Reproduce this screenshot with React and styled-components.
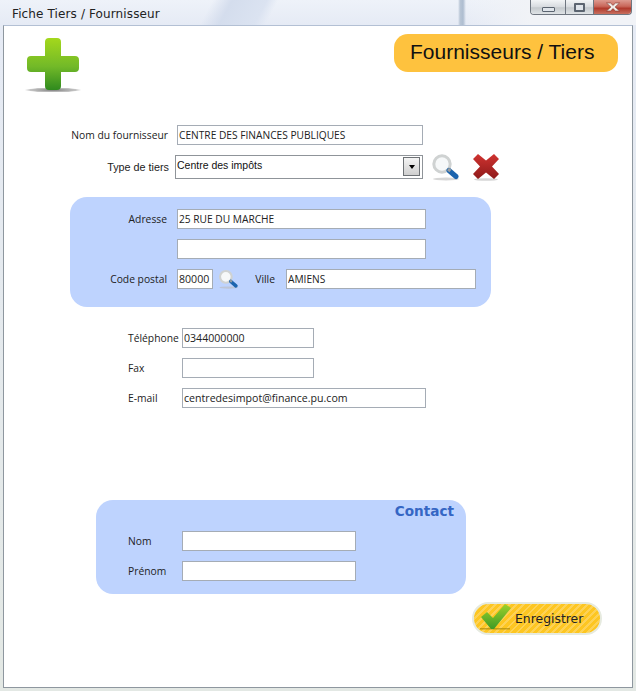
import React from 'react'
import styled, { createGlobalStyle } from 'styled-components'

function PlusIcon() {
    return (
        <svg width="58" height="56" viewBox="0 0 58 56">
            <defs>
                <linearGradient id="plusFill" x1="0" y1="0" x2="0" y2="1">
                    <stop offset="0" stopColor="#a4d81c" />
                    <stop offset="0.55" stopColor="#72b928" />
                    <stop offset="1" stopColor="#2f8a1e" />
                </linearGradient>
                <radialGradient id="plusShadow">
                    <stop offset="0" stopColor="#777" />
                    <stop offset="0.8" stopColor="#aaa" stopOpacity="0.7" />
                    <stop offset="1" stopColor="#ccc" stopOpacity="0" />
                </radialGradient>
            </defs>
            <ellipse cx="29" cy="53" rx="29" ry="2.5" fill="url(#plusShadow)" />
            <path
                d="M25 1h8a4 4 0 0 1 4 4v14h14a4 4 0 0 1 4 4v8a4 4 0 0 1-4 4H37v14a4 4 0 0 1-4 4h-8a4 4 0 0 1-4-4V35H7a4 4 0 0 1-4-4v-8a4 4 0 0 1 4-4h14V5a4 4 0 0 1 4-4z"
                fill="url(#plusFill)"
            />
        </svg>
    )
}

function SearchIcon({ size }) {
    return (
        <svg width={size} height={size} viewBox="0 0 28 28">
            <ellipse cx="15" cy="26" rx="13" ry="1.5" fill="#bbb" opacity="0.6" />
            <circle cx="11" cy="11" r="8.2" fill="#f6f8f9" stroke="#cfd2d2" strokeWidth="3" />
            <path d="M18 17.5l7 6" stroke="#1c64ad" strokeWidth="5" strokeLinecap="round" />
            <path d="M17 16l2.4 2" stroke="#9a9d9e" strokeWidth="3" />
        </svg>
    )
}

function CrossIcon() {
    return (
        <svg width="28" height="28" viewBox="0 0 28 28">
            <defs>
                <linearGradient id="crossFill" x1="0" y1="0" x2="0" y2="1">
                    <stop offset="0" stopColor="#d03330" />
                    <stop offset="1" stopColor="#8e1a1a" />
                </linearGradient>
            </defs>
            <ellipse cx="14" cy="26.5" rx="12" ry="1.3" fill="#bbb" opacity="0.6" />
            <path
                d="M6 1l8 6.5L22 1l5 5-7 7.5 7 7.5-5 5-8-6.5L6 26l-5-5 7-7.5L1 6z"
                fill="url(#crossFill)"
            />
        </svg>
    )
}

function CheckIcon() {
    return (
        <svg width="36" height="30" viewBox="0 0 36 30">
            <defs>
                <linearGradient id="checkFill" x1="0" y1="0" x2="0" y2="1">
                    <stop offset="0" stopColor="#9ed22a" />
                    <stop offset="1" stopColor="#3f9a26" />
                </linearGradient>
            </defs>
            <rect x="2" y="25" width="30" height="1.5" fill="#a98a10" opacity="0.7" />
            <path d="M3 14l6-5 6 6L27 1l6 4-17 21h-3z" fill="url(#checkFill)" />
        </svg>
    )
}

function CloseGlyph() {
    return (
        <svg width="16" height="10" viewBox="0 0 16 10">
            <path d="M1.5 1h4l2.5 2.4L10.5 1h4l-4.4 4 4.4 4h-4L8 6.6 5.5 9h-4l4.4-4z" fill="#f1ece9" stroke="#7d3a32" strokeWidth="0.6" />
        </svg>
    )
}

function App() {
    return (
        <Window>
            <GlobalStyle />
            <TitleBar>
                <Caption>Fiche Tiers / Fournisseur</Caption>
                <Controls>
                    <Control $width={34}><MinGlyph /></Control>
                    <Control $width={27}><MaxGlyph /></Control>
                    <CloseControl><CloseGlyph /></CloseControl>
                </Controls>
            </TitleBar>
            <Content>
                <Header>
                    <PlusSlot><PlusIcon /></PlusSlot>
                    <Heading>Fournisseurs / Tiers</Heading>
                </Header>

                <MainFields>
                    <Row>
                        <Label $width={164} $gap={9}>Nom du fournisseur</Label>
                        <Field $width={246} $caps defaultValue="CENTRE DES FINANCES PUBLIQUES" readOnly />
                    </Row>
                    <Row>
                        <Label $width={165} $gap={6} $ui>Type de tiers</Label>
                        <Select>
                            <span>Centre des impôts</span>
                            <SelectArrow />
                        </Select>
                        <IconSlot $left={8}><SearchIcon size={28} /></IconSlot>
                        <IconSlot $left={13}><CrossIcon /></IconSlot>
                    </Row>
                </MainFields>

                <AddressPanel>
                    <Row>
                        <Label $width={87} $gap={10}>Adresse</Label>
                        <Field $width={249} $caps defaultValue="25 RUE DU MARCHE" readOnly />
                    </Row>
                    <Row>
                        <Label $width={87} $gap={10} />
                        <Field $width={249} readOnly />
                    </Row>
                    <Row>
                        <Label $width={87} $gap={10}>Code postal</Label>
                        <Field $width={36} defaultValue="80000" readOnly />
                        <IconSlot $left={5}><SearchIcon size={20} /></IconSlot>
                        <Label $width={20} $gap={11} $left={17}>Ville</Label>
                        <Field $width={190} $caps defaultValue="AMIENS" readOnly />
                    </Row>
                </AddressPanel>

                <PhoneFields>
                    <Row>
                        <Label $width={54} $align="left">Téléphone</Label>
                        <Field $width={132} defaultValue="0344000000" readOnly />
                    </Row>
                    <Row>
                        <Label $width={54} $align="left">Fax</Label>
                        <Field $width={132} readOnly />
                    </Row>
                    <Row>
                        <Label $width={54} $align="left">E-mail</Label>
                        <Field $width={244} defaultValue="centredesimpot@finance.pu.com" readOnly />
                    </Row>
                </PhoneFields>

                <ContactPanel>
                    <ContactTitle>Contact</ContactTitle>
                    <Row>
                        <Label $width={54} $align="left">Nom</Label>
                        <Field $width={174} readOnly />
                    </Row>
                    <Row>
                        <Label $width={54} $align="left">Prénom</Label>
                        <Field $width={174} readOnly />
                    </Row>
                </ContactPanel>

                <SaveButton>
                    <CheckSlot><CheckIcon /></CheckSlot>
                    Enregistrer
                </SaveButton>
            </Content>
        </Window>
    )
}

export default App

const GlobalStyle = createGlobalStyle`
    html, body {
        margin: 0;
        padding: 0;
    }
    body {
        font-family: "DejaVu Sans", sans-serif;
    }
`

const Window = styled.div`
    width: 636px;
    height: 691px;
    box-sizing: border-box;
    padding: 0 3px 3px;
    display: flex;
    flex-direction: column;
    overflow: hidden;
    background:
        linear-gradient(90deg, transparent 458px, #b9c6d6 460px, #aebdd0 463px, transparent 466px) 0 0 / 100% 25px no-repeat,
        linear-gradient(118deg, transparent 188px, #d4dded 205px, #dbe3f1 236px, transparent 246px) 0 0 / 100% 25px no-repeat,
        linear-gradient(90deg, transparent 466px, #f1f3f7 530px) 0 0 / 100% 25px no-repeat,
        linear-gradient(180deg, #eef2f9 0, #e6ebf5 24px, #e3e8e4 100%);
`

const TitleBar = styled.div`
    height: 25px;
    flex: none;
    display: flex;
    justify-content: space-between;
    align-items: flex-start;
`

const Caption = styled.div`
    margin: 7px 0 0 9px;
    font-size: 12px;
    letter-spacing: 0.12px;
    line-height: 14px;
    color: #222;
`

const Controls = styled.div`
    display: flex;
    height: 15px;
    margin-right: 1px;
    border: 1px solid #6f7680;
    border-top: none;
    border-radius: 0 0 4px 4px;
    box-sizing: border-box;
    overflow: hidden;
`

const Control = styled.div`
    width: ${props => props.$width}px;
    display: flex;
    align-items: center;
    justify-content: center;
    border-right: 1px solid #6f7680;
    background: linear-gradient(180deg, #f2f4f6 0, #d7dbdf 50%, #c4c9cd 55%, #dfe3e6 100%);
`

const MinGlyph = styled.div`
    width: 11px;
    height: 3px;
    margin-top: 4px;
    background: #dfe4ea;
    border: 1px solid #5b6470;
    border-radius: 1px;
`

const MaxGlyph = styled.div`
    width: 7px;
    height: 5px;
    background: #dfe4ea;
    border: 2px solid #5b6470;
    border-radius: 1px;
`

const CloseControl = styled.div`
    width: 37px;
    display: flex;
    align-items: center;
    justify-content: center;
    background: linear-gradient(180deg, #dd9a90 0, #c9675a 45%, #b13a2d 60%, #c8705f 100%);
`

const Content = styled.div`
    flex: 1;
    display: flex;
    flex-direction: column;
    background: #fff;
    border: 1px solid #8e979f;
    border-top-color: #b3c0d4;
    margin: 0;
`

const Header = styled.div`
    display: flex;
    justify-content: space-between;
    align-items: flex-start;
    box-sizing: border-box;
    height: 67px;
    padding: 8px 14px 0 20px;
`

const PlusSlot = styled.div`
    margin-top: 3px;
    line-height: 0;
`

const Heading = styled.div`
    width: 224px;
    height: 38px;
    box-sizing: border-box;
    padding-left: 16px;
    border-radius: 14px;
    background: #fec23e;
    font: 21px/36px "Liberation Sans", sans-serif;
    color: #111;
`

const MainFields = styled.div`
    display: flex;
    flex-direction: column;
    gap: 8px;
    margin-top: 32px;
`

const Row = styled.div`
    display: flex;
    align-items: center;
`

const Label = styled.div`
    flex: none;
    width: ${props => props.$width}px;
    margin-left: ${props => props.$left || 0}px;
    margin-right: ${props => props.$gap || 0}px;
    text-align: ${props => props.$align || 'right'};
    white-space: nowrap;
    font-family: ${props => (props.$ui ? '"Liberation Sans", sans-serif' : '"Open Sans", sans-serif')};
    font-size: ${props => (props.$ui ? '10.8px' : '10.3px')};
    color: #222;
`

const Field = styled.input`
    width: ${props => props.$width}px;
    height: 20px;
    box-sizing: border-box;
    flex: none;
    padding: 0 1px 1px;
    margin: 0;
    border: 1px solid #a5acb5;
    background: #fff;
    font-family: "Open Sans", sans-serif;
    font-size: ${props => (props.$caps ? '10.2px' : '10.6px')};
    color: #222;
    outline: none;
`

const Select = styled.div`
    width: 248px;
    height: 24px;
    box-sizing: border-box;
    display: flex;
    justify-content: space-between;
    align-items: flex-start;
    padding: 1px 2px 0 1px;
    border: 1px solid #8f9499;
    background: #fff;
    font: 10.5px/16px "Liberation Sans", sans-serif;
    color: #111;
`

const SelectArrow = styled.div`
    width: 17px;
    height: 19px;
    box-sizing: border-box;
    border: 1px solid #6e7276;
    background: linear-gradient(180deg, #f4f4f4, #cfcfcf);
    display: flex;
    align-items: center;
    justify-content: center;

    &::after {
        content: "";
        border-left: 3px solid transparent;
        border-right: 3px solid transparent;
        border-top: 4px solid #000;
    }
`

const IconSlot = styled.div`
    flex: none;
    margin-left: ${props => props.$left}px;
    line-height: 0;
`

const AddressPanel = styled.div`
    width: 421px;
    height: 110px;
    box-sizing: border-box;
    margin: 16px 0 0 66px;
    padding: 12px 0 0 10px;
    display: flex;
    flex-direction: column;
    gap: 10px;
    border-radius: 17px;
    background: #bed3fe;
`

const PhoneFields = styled.div`
    display: flex;
    flex-direction: column;
    gap: 10px;
    margin: 21px 0 0 124px;
`

const ContactPanel = styled.div`
    width: 370px;
    height: 94px;
    box-sizing: border-box;
    margin: 92px 0 0 92px;
    padding: 0 12px 0 32px;
    display: flex;
    flex-direction: column;
    gap: 10px;
    border-radius: 17px;
    background: #bed3fe;
`

const ContactTitle = styled.div`
    height: 21px;
    text-align: right;
    font-size: 13.6px;
    font-weight: bold;
    line-height: 22px;
    color: #3566c4;
`

const SaveButton = styled.div`
    align-self: flex-end;
    width: 130px;
    height: 33px;
    box-sizing: border-box;
    margin: 8px 30px 0 0;
    display: flex;
    align-items: center;
    border: 2px solid #e6eadf;
    border-radius: 17px;
    background: repeating-linear-gradient(-45deg, #fdc621 0, #fdc621 3px, #fdd256 3px, #fdd256 5px);
    font-size: 12.4px;
    color: #222;
`

const CheckSlot = styled.div`
    flex: none;
    width: 37px;
    line-height: 0;
    margin-left: 4px;
    margin-top: -2px;
`
